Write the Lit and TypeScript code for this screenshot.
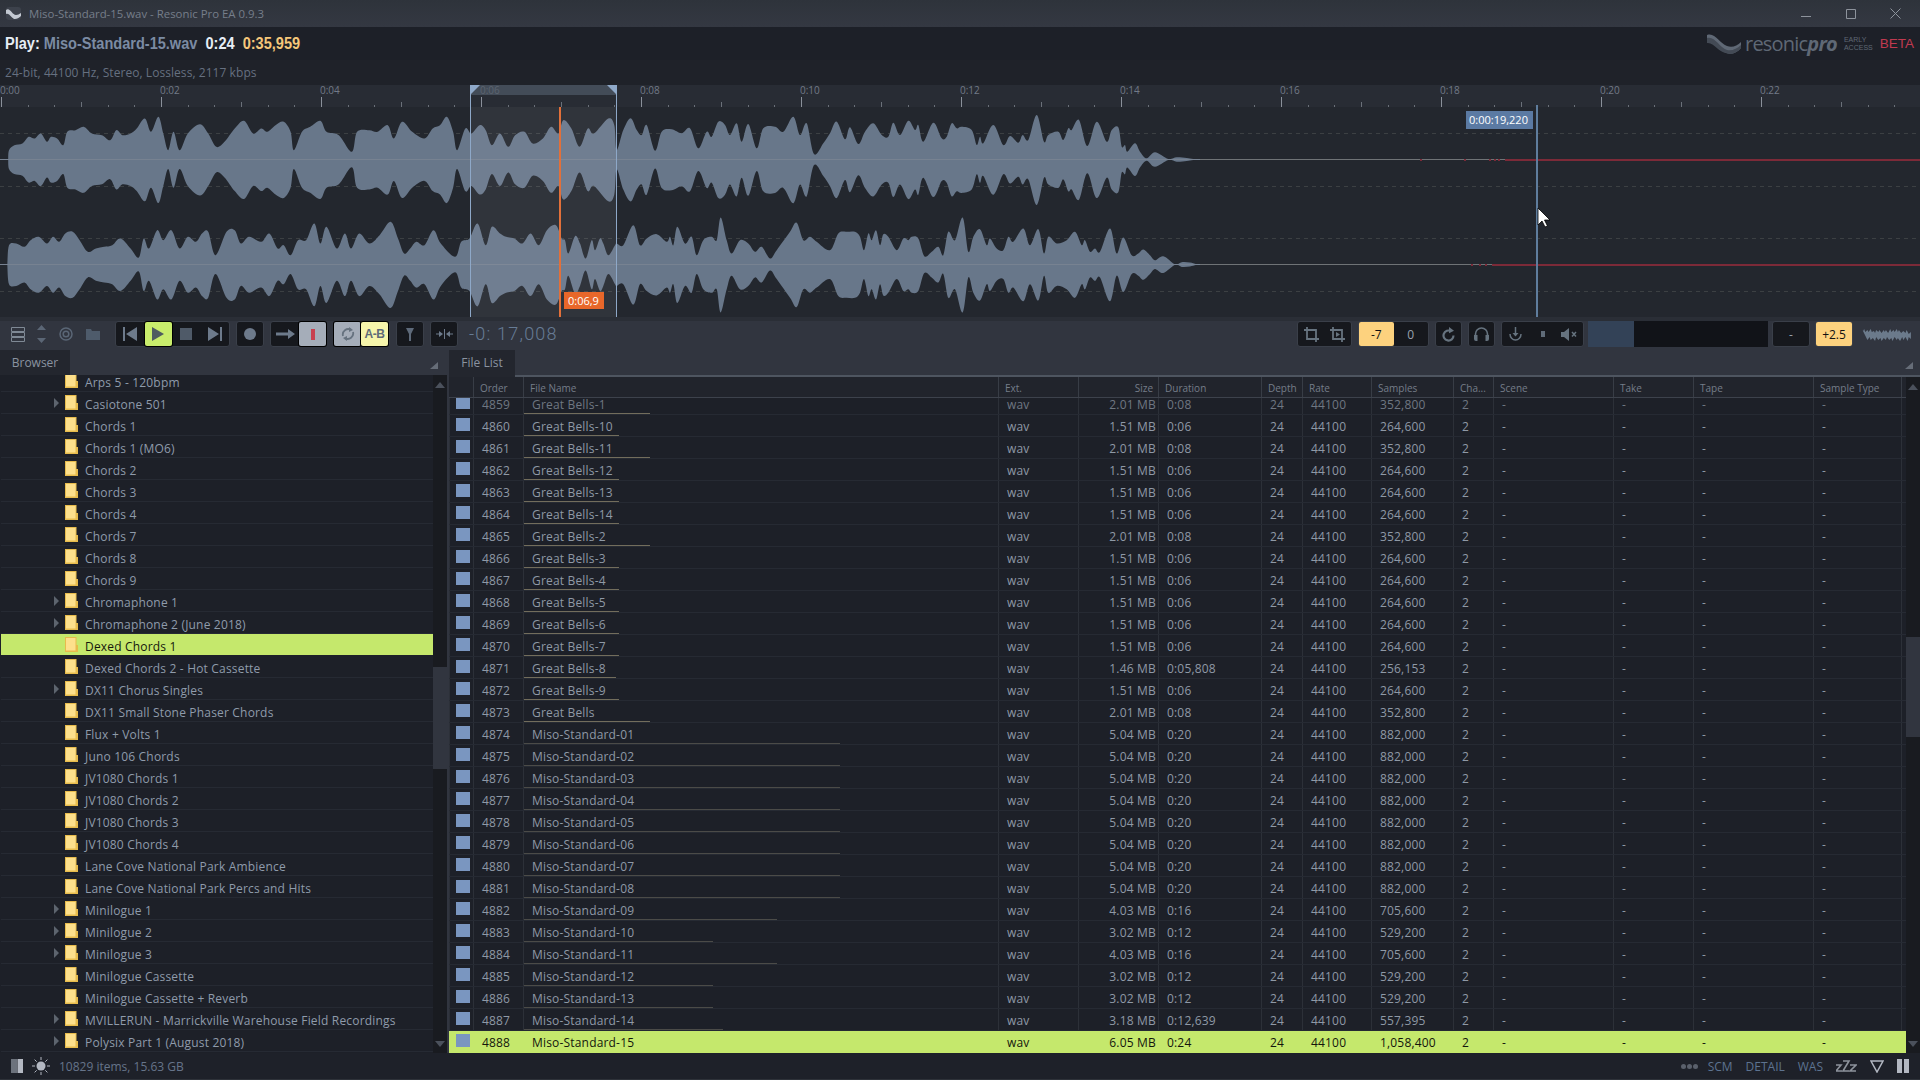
import { LitElement, html, svg, css } from 'lit';
import { customElement, property } from 'lit/decorators.js';

const UI_FONT = css`"Open Sans", "Liberation Sans", sans-serif`;

// traced from the waveform, flat x,y lists in crop coordinates
const CH1_A = [20,478,22,450,35,435,55,430,70,410,85,415,100,400,115,425,125,410,140,415,155,435,165,395,185,390,205,380,225,400,250,405,270,420,285,390,300,405,320,400,335,385,355,355,370,395,388,350,400,400,412,450,425,395,440,450,460,400,490,372,510,400,530,440,550,425,575,385,598,362,620,400,640,385,655,395,675,375,695,365,712,395,720,450,740,395,760,380,785,362,800,395,830,405,862,455,875,395,905,390,925,395,950,375,965,415,985,365,1010,395,1040,415,1060,385,1078,375,1095,350,1110,395,1120,450,1140,385,1155,400,1175,375,1190,390,1205,435,1225,400,1245,440,1262,405,1285,395,1305,430,1330,415,1350,380,1368,400,1380,360,1400,385,1420,440,1440,385,1455,400,1490,355,1505,375];
const CH1_B = [530,210,550,150,572,115,590,150,605,165,620,135,645,212,665,155,695,148,725,160,750,145,775,205,800,155,815,170,835,125,855,135,870,165,890,130,905,185,925,132,950,205,970,145,1005,140,1030,155,1060,110,1080,165,1100,130,1122,222,1150,190,1170,160,1190,125];
const CH1_C = [15,178,30,142,55,192,75,155,100,130,125,165,145,170,160,128,180,165,205,122,225,150,235,135,250,185,280,128,305,175,320,170,335,130,350,145,365,140,395,150,410,195,420,170,430,190,460,135,490,195,510,168,535,188,548,165,565,180,590,105,612,185,625,165,655,155,670,180,685,145,695,150,717,120,742,198,770,125,800,185,815,150,835,142,845,200,855,195,862,215,885,190,900,215,920,235,945,217,985,237,1010,232,1040,234,1060,237,1090,238];
const CH2_A = [18,793,22,735,40,730,60,740,75,720,95,710,115,730,130,710,145,725,160,700,178,695,195,720,215,755,235,745,255,740,275,735,295,715,320,745,340,772,352,715,365,745,385,690,400,720,420,690,440,745,460,710,480,725,495,700,510,695,528,765,555,695,575,690,590,730,610,710,640,725,660,700,680,745,695,735,712,765,730,720,750,720,770,670,785,730,800,680,825,745,845,700,860,745,880,700,905,730,930,705,957,665,975,715,990,760,1005,745,1020,725,1040,735,1062,690,1080,730,1115,770,1130,725,1150,715,1170,670,1190,735,1205,680,1225,700,1240,710,1260,715,1280,730,1300,700,1320,735,1340,690,1362,675];
const CH2_B = [365,475,375,480,385,520,405,468,420,490,437,535,455,480,465,510,480,475,490,490,505,525,525,495,530,490,550,495,580,435,600,495,620,475,650,462,680,485,690,470,700,495,712,440,735,490,755,470,770,525,790,480,815,470,830,480,842,412,860,480,875,520,900,480,925,490,945,515,965,500,990,535,1010,510,1050,455,1070,428,1090,480,1110,470,1130,485,1170,510,1195,460];
const CH2_C = [20,455,45,455,60,470,72,510,85,460,95,480,108,450,120,495,130,462,145,470,170,510,190,475,205,480,215,470,235,475,253,528,275,515,295,500,310,525,325,455,345,480,368,412,385,515,400,470,420,447,440,495,450,475,470,505,490,510,505,470,520,485,550,445,570,495,595,447,612,520,625,470,650,490,680,480,705,455,725,495,735,480,750,515,765,505,780,515,810,445,830,520,850,472,875,525,895,520,910,508,930,525,945,540,970,528,1005,552,1025,546,1050,547,1070,552,1100,553];

type Pt = [number, number];

function envelope(a: number[], b: number[], c: number[], midA: number, midB: number): Pt[] {
  const out: Pt[] = [];
  for (let i = 0; i < a.length; i += 2) out.push([a[i] / 2.45, (midA - a[i + 1]) / 3]);
  for (let i = 0; i < b.length; i += 2) out.push([440 + b[i] / 3, (midB - b[i + 1]) / 3]);
  for (let i = 0; i < c.length; i += 2) out.push([840 + c[i] / 3, (midB - c[i + 1]) / 3]);
  return out;
}

function curve(p: Pt[]) {
  let d = `${p[0][0].toFixed(1)} ${p[0][1].toFixed(1)}`;
  for (let i = 0; i < p.length - 1; i++) {
    const a = p[Math.max(i - 1, 0)], b = p[i], c = p[i + 1], e = p[Math.min(i + 2, p.length - 1)];
    const c1 = [b[0] + (c[0] - a[0]) / 6, b[1] + (c[1] - a[1]) / 6];
    const c2 = [c[0] - (e[0] - b[0]) / 6, c[1] - (e[1] - b[1]) / 6];
    d += `C${c1[0].toFixed(1)} ${c1[1].toFixed(1)} ${c2[0].toFixed(1)} ${c2[1].toFixed(1)} ${c[0].toFixed(1)} ${c[1].toFixed(1)}`;
  }
  return d;
}

function wavePath(env: Pt[], mid: number) {
  const top = env.map(([x, a]) => [x, mid - a] as Pt);
  const bottom = env.map(([x, a]) => [x, mid + a * 1.02] as Pt).reverse();
  return `M${curve(top)}L${curve(bottom)}Z`;
}

const PX_PER_SEC = 80;

@customElement('wave-view')
export class WaveView extends LitElement {
  static styles = css`
    :host { display: block; height: 232px; }
    svg { display: block; }
    .tick-label { font: 10px ${UI_FONT}; fill: #727a87; }
    .sel-label { fill: #5c6470; }
    .tip { font: 11px ${UI_FONT}; fill: #fff; }
  `;

  ruler() {
    const marks = [];
    for (let i = 0; i <= 72; i++) {
      const x = Math.round(1 + (i * PX_PER_SEC) / 3);
      const top = i % 6 === 0 ? 97 : i % 3 === 0 ? 102 : 105;
      const color = i % 6 === 0 ? '#8a909a' : '#6a7079';
      marks.push(svg`<rect x=${x} y=${top} width="1" height=${107 - top} fill=${color}></rect>`);
      if (i % 6 === 0 && i < 72) {
        const cls = i === 18 ? 'tick-label sel-label' : 'tick-label';
        marks.push(svg`<text class=${cls} x=${x - 1} y="94">0:${String(i / 3).padStart(2, '0')}</text>`);
      }
    }
    return marks;
  }

  render() {
    const ch1 = wavePath(envelope(CH1_A, CH1_B, CH1_C, 478, 238.5), 159.5);
    const ch2 = wavePath(envelope(CH2_A, CH2_B, CH2_C, 793, 553), 264.5);
    return html`
      <svg width="1920" height="232" viewBox="0 85 1920 232" shape-rendering="geometricPrecision">
        <rect x="0" y="85" width="1920" height="22" fill="#282c34"></rect>
        <rect x="0" y="107" width="1920" height="210" fill="#23272e"></rect>
        <rect x="470" y="85" width="147" height="10" fill="#434c58"></rect>
        ${[133, 186, 238, 291].map(y => svg`<line x1="0" x2="1920" y1=${y + 0.5} y2=${y + 0.5} stroke="#3c4043" stroke-dasharray="4 4"></line>`)}
        <path d=${ch1} fill="#68778a"></path>
        <path d=${ch2} fill="#68778a"></path>
        <rect x="0" y="159" width="1200" height="1" fill="#778291"></rect>
        <rect x="0" y="264" width="1200" height="1" fill="#778291"></rect>
        <rect x="1200" y="159" width="305" height="1" fill="#6f7376"></rect>
        <rect x="1200" y="264" width="292" height="1" fill="#6f7376"></rect>
        <rect x="1505" y="159" width="415" height="2" fill="#7c2a38"></rect>
        <rect x="1492" y="264" width="428" height="2" fill="#7c2a38"></rect>
        ${[1420, 1464, 1489, 1494, 1498].map(x => svg`<rect x=${x} y="159" width="2" height="2" fill="#7c2a38"></rect>`)}
        ${[1471, 1479, 1485].map(x => svg`<rect x=${x} y="264" width="2" height="2" fill="#7c2a38"></rect>`)}
        <rect x="470" y="107" width="147" height="210" fill="#dfe6f5" opacity="0.07"></rect>
        ${this.ruler()}
        <rect x="470" y="85" width="1" height="232" fill="#8ea8c8"></rect>
        <rect x="616" y="85" width="1" height="232" fill="#8ea8c8"></rect>
        <path d="M470 85h10l-10 10zM617 85h-10l10 10z" fill="#8fa9c9"></path>
        <rect x="559" y="107" width="2" height="210" fill="#e2703a"></rect>
        <rect x="564" y="292" width="40" height="17" fill="#e8672a"></rect>
        <text class="tip" x="568" y="304.500">0:06,9</text>
        <rect x="1536" y="105" width="2" height="212" fill="#5f7d9d"></rect>
        <rect x="1466" y="111" width="67" height="18" fill="#5b7aa3"></rect>
        <text class="tip" x="1469" y="124">0:00:19,220</text>
        <path d="M1538 208v17l4-4 3 6 2.500-1-3-6h5.500z" fill="#fff" stroke="#000" stroke-width="0.8"></path>
      </svg>
    `;
  }
}

@customElement('transport-bar')
export class TransportBar extends LitElement {
  static styles = css`
    :host { display: flex; height: 29px; background: #31353f; font: 12px ${UI_FONT}; color: #8b94a0; }
    svg { display: block; }
    .tools { display: flex; width: 115px; padding-left: 11px; box-sizing: border-box; height: 26px; align-items: center; gap: 12px; }
    .tools-gap { margin-left: 1px; }
    .main { display: flex; gap: 6px; flex: 1; }
    .box { display: flex; height: 26px; box-sizing: border-box; background: #16181d; border: 1px solid #3a3f49; border-radius: 3px; }
    .btn { display: flex; align-items: center; justify-content: center; flex: 1; min-width: 0; }
    .btn.fixed { flex: none; width: 27px; }
    .play { background: #c9ed6c; border-radius: 2px; box-shadow: 0 0 0 1px #000; }
    .pale { background: #a5adb9; border-radius: 2px; box-shadow: 0 0 0 1px #000; }
    .ab { background: #f6f5ab; border-radius: 2px; box-shadow: 0 0 0 1px #000; color: #5f6b78; font: bold 12px "Liberation Sans", sans-serif; letter-spacing: -0.5px; }
    .amber { background: #fdd27e; border-radius: 2px; color: #111; }
    .counter { margin-left: 5px; height: 26px; font: 300 18px/26px Roboto, sans-serif; letter-spacing: 1.2px; color: #677c96; white-space: pre; }
    .right { display: flex; gap: 6px; padding-right: 8px; margin-left: auto; }
    .meter { display: flex; width: 180px; height: 26px; margin: 0 -2px; background: #111318; }
    .meter-fill { width: 46px; background: #334257; }
    .mini { margin: 5px 0 0 3px; }
    .dim { color: #99a2ae; }
  `;

  render() {
    return html`
      <div class="tools">
        <svg width="14" height="15" viewBox="0 0 14 15" fill="none" stroke="#7f8995"><path d="M.5.5h13v4H.5zM.5 5.500h13v4H.5zM.5 10.500h13v4H.5z"></path></svg>
        <svg width="9" height="18" viewBox="0 0 9 18" fill="#5b6675"><path d="M4.500 0L9 5H0zM0 13h9l-4.500 5z"></path></svg>
        <svg class="tools-gap" width="14" height="14" viewBox="0 0 14 14" fill="none" stroke="#5a6676" stroke-width="1.500"><circle cx="7" cy="7" r="6"></circle><circle cx="7" cy="7" r="2.800"></circle></svg>
        <svg class="tools-gap" width="14" height="11" viewBox="0 0 14 11" fill="#4e5b6b"><path d="M0 0h5l1 2h8v9H0z"></path></svg>
      </div>
      <div class="main">
        <div class="box" style="width:115px">
          <div class="btn"><svg width="14" height="14" viewBox="0 0 14 14" fill="#6d7a8b"><path d="M0 0h2v14H0zM14 0v14L3 7z"></path></svg></div>
          <div class="btn fixed play"><svg width="12" height="14" viewBox="0 0 12 14" fill="#4f5c60"><path d="M0 0l12 7-12 7z"></path></svg></div>
          <div class="btn"><svg width="12" height="12" viewBox="0 0 12 12" fill="#4f5a68"><path d="M0 0h12v12H0z"></path></svg></div>
          <div class="btn"><svg width="14" height="14" viewBox="0 0 14 14" fill="#6d7a8b"><path d="M0 0l11 7-11 7zM12 0h2v14h-2z"></path></svg></div>
        </div>
        <div class="box" style="width:28px"><div class="btn"><svg width="12" height="12" viewBox="0 0 12 12" fill="#6d7a8b"><circle cx="6" cy="6" r="6"></circle></svg></div></div>
        <div class="box" style="width:57px">
          <div class="btn"><svg width="19" height="10" viewBox="0 0 19 10" fill="#6d7a8b"><path d="M0 3.500h12V0l7 5-7 5V6.500H0z"></path></svg></div>
          <div class="btn fixed pale"><svg width="4" height="11" viewBox="0 0 4 11" fill="#c8404f"><path d="M0 0h4v11H0z"></path></svg></div>
        </div>
        <div class="box" style="width:57px">
          <div class="btn fixed pale"><svg width="14" height="14" viewBox="0 0 14 14" fill="none" stroke="#66727f" stroke-width="1.800"><path d="M2 9a5.500 5.500 0 0 1 8-6.200M12 5a5.500 5.500 0 0 1-8 6.200"></path><path d="M8 0l4 3-4 2zM6 14l-4-3 4-2z" fill="#66727f" stroke="none"></path></svg></div>
          <div class="btn fixed ab">A-B</div>
        </div>
        <div class="box" style="width:28px"><div class="btn"><svg width="8" height="13" viewBox="0 0 8 13" fill="#5e6a7a"><path d="M0 0h8L5 6v7H3V6z"></path></svg></div></div>
        <div class="box" style="width:28px"><div class="btn"><svg width="17" height="10" viewBox="0 0 17 10" fill="#6d7a8b"><path d="M8 0h1v10H8zM0 4.500h3V2l4 3-4 3V5.500H0zM17 4.500h-3V2l-4 3 4 3V5.500h3z"></path></svg></div></div>
        <div class="counter">-0: 17,008</div>
      </div>
      <div class="right">
        <div class="box" style="width:55px">
          <div class="btn"><svg width="15" height="15" viewBox="0 0 15 15" fill="none" stroke="#66737f" stroke-width="1.800"><path d="M3 0v12h12M0 3h12v12"></path></svg></div>
          <div class="btn"><svg width="15" height="15" viewBox="0 0 15 15" fill="none" stroke="#66737f" stroke-width="1.800"><path d="M3 0v12h12M0 3h12v12"></path><path d="M6 5l4 2.500L6 10z" fill="#66737f" stroke="none"></path></svg></div>
        </div>
        <div class="box" style="width:71px">
          <div class="btn amber">-7</div>
          <div class="btn dim">0</div>
        </div>
        <div class="box" style="width:27px"><div class="btn"><svg width="13" height="15" viewBox="0 0 13 15" fill="none" stroke="#66737f" stroke-width="2.200"><path d="M9 4.200a5 5 0 1 0 2.500 4.300"></path><path d="M7 0l5 3.800-5 2.500z" fill="#66737f" stroke="none"></path></svg></div></div>
        <div class="box" style="width:27px"><div class="btn"><svg width="15" height="15" viewBox="0 0 15 15" fill="none" stroke="#66737f" stroke-width="1.600"><path d="M1.500 11V7a6 6 0 0 1 12 0v4"></path><path d="M0 8h3.500v6H2a2 2 0 0 1-2-2zM15 8h-3.500v6H13a2 2 0 0 0 2-2z" fill="#66737f" stroke="none"></path></svg></div></div>
        <div class="box" style="width:83px">
          <div class="btn"><svg width="13" height="15" viewBox="0 0 13 15" fill="none" stroke="#66737f" stroke-width="1.500"><path d="M1 7a5.500 6 0 0 0 11 0"></path><path d="M6.500 0v8"></path><path d="M3.500 6h6l-3 3.500z" fill="#66737f" stroke="none"></path></svg></div>
          <div class="btn"><svg width="4" height="6" viewBox="0 0 4 6" fill="#5f6b78"><path d="M0 0h4v6H0z"></path></svg></div>
          <div class="btn"><svg width="17" height="13" viewBox="0 0 17 13" fill="#66737f"><path d="M0 4h3l5-4v13L3 9H0z"></path><path d="M11 4l4 4.500M15 4l-4 4.500" stroke="#66737f" stroke-width="1.500"></path></svg></div>
        </div>
        <div class="meter"><div class="meter-fill"></div></div>
        <div class="box" style="width:38px"><div class="btn dim">-</div></div>
        <div class="box" style="width:38px;margin-left:-1px"><div class="btn amber">+2.5</div></div>
        <svg class="mini" width="50" height="16" viewBox="0 0 46 16" preserveAspectRatio="none" fill="#6b7a8b"><path d="M0 3l1 2 1-2 1 3 2-2 1 2 2-3 1 3 2-1 1 2 1-3 2 2 1-2 2 3 2-3 1 2 1-2 2 3 2-4 1 3 2-2 1 2 2-3 1 3 1-2 2 3 2-2 2 2 1-3 2 4 2-2 V13l-2-2-1 4-2-4-2 3-1-3-2 4-2-3-1 2-2-3-2 4-1-3-2 2-2-3-1 3-2-2-2 3-1-3-2 2-2-3-1 4-2-3-2 2-1-3-2 3z"></path></svg>
      </div>
    `;
  }
}

@customElement('scroll-track')
export class ScrollTrack extends LitElement {
  @property({ type: Number }) thumbTop = 0;
  @property({ type: Number }) thumbHeight = 0;

  static styles = css`
    :host { display: block; position: relative; width: 14px; background: #191b20; overflow: hidden; }
    .thumb { background: #31353f; }
    .arrow { position: absolute; left: 2px; width: 0; height: 0; border-left: 5px solid transparent; border-right: 5px solid transparent; }
    .up { top: 7px; border-bottom: 6px solid #4b515c; }
    .down { bottom: 6px; border-top: 6px solid #4b515c; }
  `;

  render() {
    return html`
      <div class="thumb" style="margin-top:${this.thumbTop}px;height:${this.thumbHeight}px"></div>
      <div class="arrow up"></div>
      <div class="arrow down"></div>
    `;
  }
}

const FOLDERS: [string, boolean][] = [
  ['Arps 5 - 120bpm', false], ['Casiotone 501', true], ['Chords 1', false], ['Chords 1 (MO6)', false],
  ['Chords 2', false], ['Chords 3', false], ['Chords 4', false], ['Chords 7', false], ['Chords 8', false],
  ['Chords 9', false], ['Chromaphone 1', true], ['Chromaphone 2 (June 2018)', true], ['Dexed Chords 1', false],
  ['Dexed Chords 2 - Hot Cassette', false], ['DX11 Chorus Singles', true], ['DX11 Small Stone Phaser Chords', false],
  ['Flux + Volts 1', false], ['Juno 106 Chords', false], ['JV1080 Chords 1', false], ['JV1080 Chords 2', false],
  ['JV1080 Chords 3', false], ['JV1080 Chords 4', false], ['Lane Cove National Park Ambience', false],
  ['Lane Cove National Park Percs and Hits', false], ['Minilogue 1', true], ['Minilogue 2', true], ['Minilogue 3', true],
  ['Minilogue Cassette', false], ['Minilogue Cassette + Reverb', false],
  ['MVILLERUN - Marrickville Warehouse Field Recordings', true], ['Polysix Part 1 (August 2018)', true],
];

@customElement('browser-tree')
export class BrowserTree extends LitElement {
  static styles = css`
    :host { display: flex; height: 678px; background: #1d2028; font: 12px ${UI_FONT}; letter-spacing: 0.18px; color: #8f9bab; }
    .list { flex: 1; overflow: hidden; padding-left: 1px; }
    .rows { margin-top: -5px; }
    .row { display: flex; align-items: center; height: 21px; border-bottom: 1px solid #262a33; white-space: nowrap; }
    .row.sel { background: #c5e86c; color: #14160c; border-bottom-color: #1d2028; }
    .arrow { width: 0; height: 0; margin-left: 53px; border-left: 5px solid #5d646e; border-top: 5px solid transparent; border-bottom: 5px solid transparent; }
    .no-arrow { width: 58px; }
    .folder { display: block; margin: 0 7px 0 6px; }
    .name { padding-top: 3px; }
    scroll-track { height: 100%; }
  `;

  render() {
    return html`
      <div class="list">
        <div class="rows">
          ${FOLDERS.map(([name, open]) => html`
            <div class="row ${name === 'Dexed Chords 1' ? 'sel' : ''}">
              ${open ? html`<span class="arrow"></span>` : html`<span class="no-arrow"></span>`}
              <svg class="folder" width="13" height="15" viewBox="0 0 13 15">
                <path d="M0 0h11.500v8H13v7H0z" fill="#e7bb4c"></path>
                <path d="M1 1h9.500v12.500H1z" fill="#fde08c"></path>
              </svg>
              <span class="name">${name}</span>
            </div>
          `)}
        </div>
      </div>
      <scroll-track .thumbTop=${292} .thumbHeight=${102}></scroll-track>
    `;
  }
}

interface Take { name: string; mb: number; dur: string; samples: string; }

const BELLS = ['1', '10', '11', '12', '13', '14', '2', '3', '4', '5', '6', '7', '8', '9', ''];
const bell = (s: string): Take => {
  const name = s ? `Great Bells-${s}` : 'Great Bells';
  if (s === '8') return { name, mb: 1.46, dur: '0:05,808', samples: '256,153' };
  if (s === '' || s === '1' || s === '11' || s === '2') return { name, mb: 2.01, dur: '0:08', samples: '352,800' };
  return { name, mb: 1.51, dur: '0:06', samples: '264,600' };
};
const MISO: [number, string, string][] = [
  [5.04, '0:20', '882,000'], [5.04, '0:20', '882,000'], [5.04, '0:20', '882,000'], [5.04, '0:20', '882,000'],
  [5.04, '0:20', '882,000'], [5.04, '0:20', '882,000'], [5.04, '0:20', '882,000'], [5.04, '0:20', '882,000'],
  [4.03, '0:16', '705,600'], [3.02, '0:12', '529,200'], [4.03, '0:16', '705,600'], [3.02, '0:12', '529,200'],
  [3.02, '0:12', '529,200'], [3.18, '0:12,639', '557,395'], [6.05, '0:24', '1,058,400'],
];
const TAKES: Take[] = [
  ...BELLS.map(bell),
  ...MISO.map(([mb, dur, samples], i) => ({ name: `Miso-Standard-${String(i + 1).padStart(2, '0')}`, mb, dur, samples })),
];

const HEADERS = ['', 'Order', 'File Name', 'Ext.', 'Size', 'Duration', 'Depth', 'Rate', 'Samples', 'Cha...', 'Scene', 'Take', 'Tape', 'Sample Type', ''];

@customElement('file-table')
export class FileTable extends LitElement {
  static styles = css`
    :host { display: flex; height: 676px; background: #1d2028; font: 12px ${UI_FONT}; letter-spacing: 0.18px; color: #8f99a6; }
    .table { flex: 1; min-width: 0; overflow: hidden; }
    .cols { display: grid; grid-template-columns: 24px 50px 475px 80px 80px 103px 41px 69px 82px 40px 120px 80px 120px 88px 5px; }
    .head { height: 20px; border-bottom: 1px solid #3d424c; background: #21242c; font-size: 10px; letter-spacing: 0; color: #757d89; }
    .head > div { height: 20px; padding-left: 6px; line-height: 22px; border-left: 1px solid #383d46; white-space: nowrap; overflow: hidden; }
    .head > div:first-child { border-left: 0; }
    .head > .num { text-align: right; padding: 0 5px 0 0; }
    .body { height: 655px; overflow: hidden; }
    .rows { margin-top: -5px; }
    .row { height: 21px; border-bottom: 1px solid #262a33; }
    .row > div { height: 21px; min-width: 0; line-height: 24px; padding-left: 8px; border-left: 1px solid #2c3038; white-space: nowrap; }
    .row > div:first-child { padding-left: 6px; }
    .row > .num { text-align: right; padding: 0 2px 0 0; }
    .row.ghost { color: #6f7782; }
    .row.sel { background: #c5e86c; color: #14160c; height: 22px; border-bottom: 0; }
    .row.sel > div { border-left-color: transparent; }
    .check { display: block; width: 14px; height: 13px; margin-top: 3px; background: #7a96c0; }
    .row > .file { display: flex; flex-direction: column; padding-left: 0; }
    .file-name { height: 20px; padding-left: 8px; }
    .file-bar { height: 1px; }
    .short { background: #726d5c; }
    .long { background: #4b4b48; }
    .row.sel .file-bar { background: transparent; }
    scroll-track { height: 676px; }
  `;

  render() {
    return html`
      <div class="table">
        <div class="cols head">
          ${HEADERS.map(h => html`<div class=${h === 'Size' ? 'num' : ''}>${h}</div>`)}
        </div>
        <div class="body">
          <div class="rows">
            ${TAKES.map((t, i) => {
              const isLast = i === TAKES.length - 1;
              const barWidth = Math.round(t.mb * 62.7);
              return html`
                <div class="cols row ${i === 0 ? 'ghost' : ''} ${isLast ? 'sel' : ''}">
                  <div><span class="check"></span></div>
                  <div>${4859 + i}</div>
                  <div class="file">
                    <span class="file-name">${t.name}</span>
                    <span class="file-bar ${t.mb > 2.5 ? 'long' : 'short'}" style="width:${barWidth}px"></span>
                  </div>
                  <div>wav</div>
                  <div class="num">${t.mb.toFixed(2)} MB</div>
                  <div>${t.dur}</div>
                  <div>24</div>
                  <div>44100</div>
                  <div>${t.samples}</div>
                  <div>2</div>
                  <div>-</div>
                  <div>-</div>
                  <div>-</div>
                  <div>-</div>
                  <div></div>
                </div>
              `;
            })}
          </div>
        </div>
      </div>
      <scroll-track .thumbTop=${260} .thumbHeight=${100}></scroll-track>
    `;
  }
}

@customElement('app-root')
export class AppRoot extends LitElement {
  static styles = css`
    :host { display: flex; flex-direction: column; height: 1080px; width: 1920px; overflow: hidden; background: #31353f; font: 12px ${UI_FONT}; }
    svg { display: block; }
    .title-bar { display: flex; align-items: center; height: 27px; padding-left: 6px; background: linear-gradient(#2e333b, #343842); color: #767e8a; }
    .title-logo { background: #3d424c; border-radius: 3px; }
    .title-text { margin-left: 8px; font-size: 11.4px; }
    .win { display: flex; margin-left: auto; padding-right: 2px; }
    .win-btn { display: flex; justify-content: center; align-items: center; width: 45px; height: 27px; }
    .now { display: flex; align-items: center; height: 33px; padding: 0 6px 0 5px; background: #1d2028; font: bold 16px "Liberation Sans", sans-serif; color: #e6edf5; white-space: pre; }
    .now-text { transform: scaleX(0.909); transform-origin: left center; }
    .now-file { color: #7b8ba3; }
    .now-pos { color: #f5c77a; }
    .logo { display: flex; align-items: center; margin-left: auto; color: #5f6875; }
    .logo-word { margin-left: 4px; font: 20px ${UI_FONT}; letter-spacing: -0.8px; }
    .logo-pro { font-weight: 700; font-style: italic; }
    .logo-sub { margin-left: 7px; font: 400 7px/8px "Liberation Sans", sans-serif; }
    .beta { margin-left: 7px; font: 400 13.500px "Liberation Sans", sans-serif; color: #c03a50; }
    .info { height: 25px; padding-left: 5px; line-height: 25px; letter-spacing: 0.06px; background: #1f2229; color: #667080; }
    .strip { height: 4px; background: #2a2e36; }
    .panels { display: flex; gap: 2px; height: 703px; }
    .left { width: 447px; }
    .right { width: 1471px; }
    .tabs { display: flex; position: relative; height: 25px; }
    .right .tabs { height: 27px; }
    .tab { width: 70px; height: 100%; line-height: 26px; text-align: center; background: #23262e; color: #8a93a0; }
    .right .tab { width: 66px; }
    .tab-rest { flex: 1; margin-top: 25px; height: 2px; background: #4e5560; }
    .corner { position: absolute; top: 12px; width: 0; height: 0; border-bottom: 7px solid #666d78; border-left: 8px solid transparent; }
    .left .corner { left: 430px; }
    .right .corner { left: 1456px; }
    .status { display: flex; align-items: center; height: 26px; padding: 0 11px; background: #1e2129; border-bottom: 1px solid #2e3239; color: #66748a; }
    .status-sun { margin: 0 9px 0 9px; }
    .status-end { display: flex; align-items: center; gap: 13px; margin-left: auto; color: #5d7390; }
    .dots { display: flex; gap: 1px; margin-right: -3px; }
    .dot { width: 5px; height: 5px; border-radius: 50%; background: #5a606b; }
  `;

  render() {
    return html`
      <div class="title-bar">
        <svg class="title-logo" width="15" height="13" viewBox="0 0 15 13" fill="#c3c9d2"><path d="M0 3c4-3 6 5 10 5 2 0 3-1 5-2v3c-2 2-4 3-6 3C6 12 3 5 0 7z"></path></svg>
        <span class="title-text">Miso-Standard-15.wav - Resonic Pro EA 0.9.3</span>
        <div class="win">
          <div class="win-btn"><svg width="10" height="10" viewBox="0 0 10 10" stroke="#8d939c"><path d="M0 7.500h10"></path></svg></div>
          <div class="win-btn"><svg width="10" height="10" viewBox="0 0 10 10" fill="none" stroke="#8d939c"><path d="M.5.5h9v9h-9z"></path></svg></div>
          <div class="win-btn"><svg width="11" height="11" viewBox="0 0 11 11" stroke="#8d939c"><path d="M.5.5l10 10M10.500.5l-10 10"></path></svg></div>
        </div>
      </div>
      <div class="now">
        <div class="now-text"><span>Play: </span><span class="now-file">Miso-Standard-15.wav</span><span>  0:24  </span><span class="now-pos">0:35,959</span></div>
        <div class="logo">
          <svg width="34" height="22" viewBox="0 0 34 22"><path d="M0 2c8-3 12 8 20 11 5 2 10 0 14-4v6c-4 5-10 7-15 5C11 17 7 7 0 10z" fill="#5f6875"></path><path d="M0 5c8-2 12 9 20 12 5 1 10-1 14-5v3c-4 5-10 7-15 5C11 19 7 9 0 10z" fill="#434a55"></path></svg>
          <span class="logo-word">resonic<span class="logo-pro">pro</span></span>
          <span class="logo-sub">EARLY<br>ACCESS</span>
          <span class="beta">BETA</span>
        </div>
      </div>
      <div class="info">24-bit, 44100 Hz, Stereo, Lossless, 2117 kbps</div>
      <wave-view></wave-view>
      <div class="strip"></div>
      <transport-bar></transport-bar>
      <div class="panels">
        <div class="left">
          <div class="tabs"><div class="tab">Browser</div><div class="corner"></div></div>
          <browser-tree></browser-tree>
        </div>
        <div class="right">
          <div class="tabs"><div class="tab">File List</div><div class="tab-rest"></div><div class="corner"></div></div>
          <file-table></file-table>
        </div>
      </div>
      <div class="status">
        <svg width="12" height="14" viewBox="0 0 12 14"><path d="M0 0h6v14H0z" fill="#6c727c"></path><path d="M6.500 0H12v14H6.500z" fill="#b3b8c2"></path></svg>
        <svg class="status-sun" width="18" height="18" viewBox="0 0 18 18" fill="#b3b8c2" stroke="#b3b8c2"><circle cx="9" cy="9" r="4.500" stroke="none"></circle><path d="M9 0v3M9 15v3M0 9h3M15 9h3M2.600 2.600l2.100 2.100M13.300 13.300l2.100 2.100M2.600 15.400l2.100-2.100M13.300 4.700l2.100-2.100"></path></svg>
        <span>10829 items, 15.63 GB</span>
        <div class="status-end">
          <span class="dots"><i class="dot"></i><i class="dot"></i><i class="dot"></i></span>
          <span>SCM</span>
          <span>DETAIL</span>
          <span>WAS</span>
          <svg width="21" height="14" viewBox="0 0 21 14" fill="none" stroke="#8d939c" stroke-width="1.600"><path d="M0 6h5L0 12h6M7 2h6L7 12h6M14 6h6l-6 6h6"></path></svg>
          <svg width="14" height="13" viewBox="0 0 14 13" fill="none" stroke="#b3b8c2" stroke-width="1.500"><path d="M1 1h12L7 12z"></path></svg>
          <svg width="12" height="14" viewBox="0 0 12 14" fill="#b3b8c2"><path d="M0 0h5v14H0zM7 0h5v14H7z"></path></svg>
        </div>
      </div>
    `;
  }
}
